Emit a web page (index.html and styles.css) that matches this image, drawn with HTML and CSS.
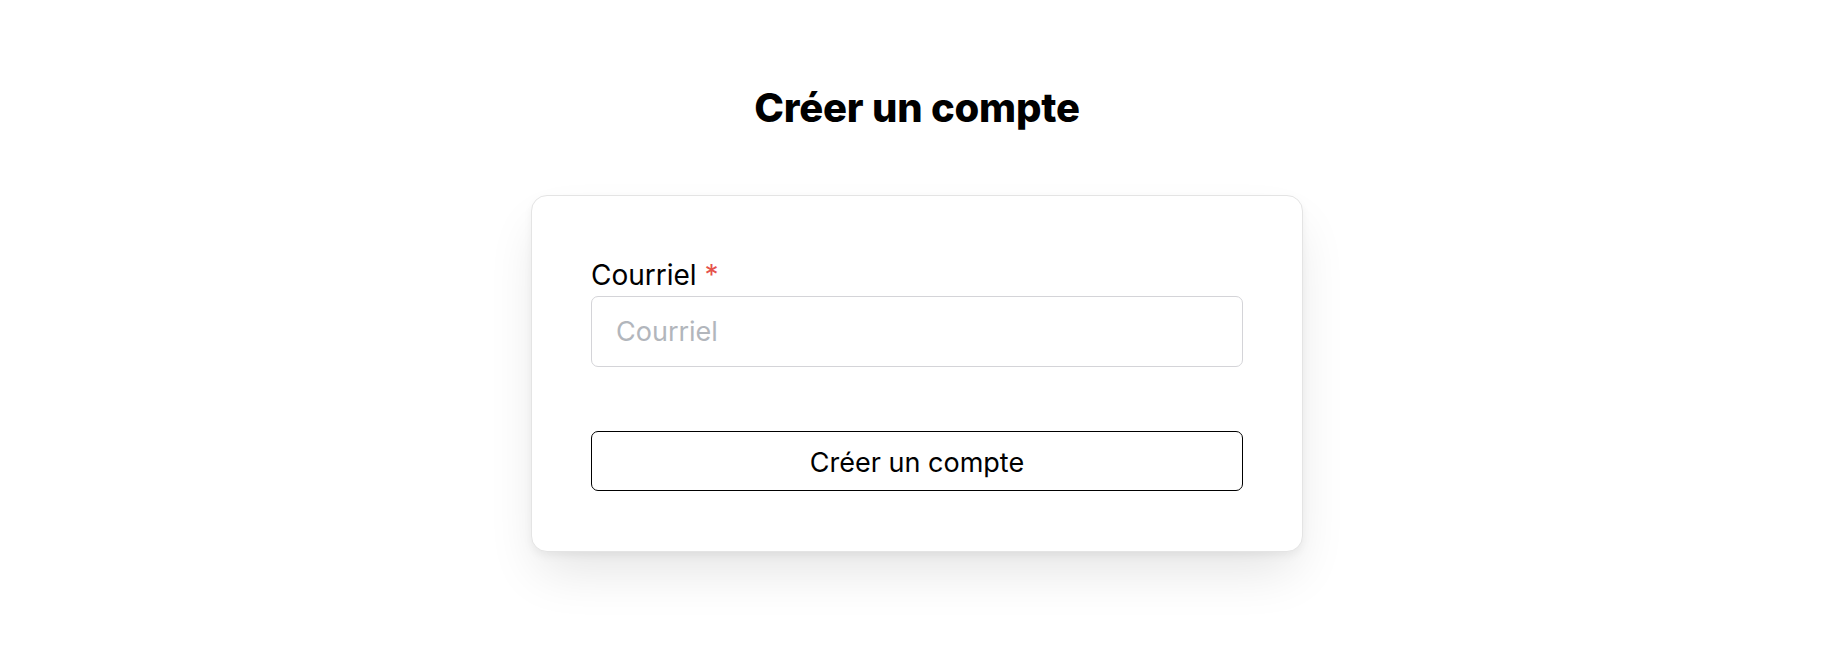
FILE: index.html
```html
<!DOCTYPE html>
<html lang="fr">
<head>
  <meta charset="UTF-8">
  <title>Créer un compte</title>
  <link rel="stylesheet" href="styles.css">
</head>
<body>
  <main class="page">
    <h1 class="titre">Créer un compte</h1>

    <form class="carte">
      <label class="etiquette" for="courriel">Courriel <span class="requis">*</span></label>
      <input type="email" id="courriel" class="champ" placeholder="Courriel">

      <button type="button" class="bouton">Créer un compte</button>
    </form>
  </main>
</body>
</html>
```

FILE: styles.css
```css
html, body {
  height: 100%;
}
body {
  margin: 0;
  background: #fff;
  color: #000;
  font-family: Inter, "Noto Sans", Arial, sans-serif;
}
.page {
  box-sizing: border-box;
  min-height: 100%;
  display: flex;
  flex-direction: column;
  align-items: center;
  padding: 84px 0 80px;
}
.titre {
  margin: 0 0 63px;
  font-size: 40px;
  line-height: 48px;
  font-weight: 800;
  letter-spacing: -0.2px;
}
.carte {
  box-sizing: border-box;
  width: 772px;
  display: flex;
  flex-direction: column;
  padding: 58px 59px 60px;
  background: #fff;
  border: 1px solid #e4e4e4;
  border-radius: 16px;
  box-shadow: 0 4px 8px rgba(0, 0, 0, 0.05), 0 26px 52px -8px rgba(0, 0, 0, 0.11);
}
.etiquette {
  font-size: 28px;
  line-height: 42px;
}
.requis {
  color: #e5534b;
}
.champ {
  box-sizing: border-box;
  height: 71px;
  padding: 0 24px;
  font-family: inherit;
  font-size: 27px;
  border: 1px solid #d4d4d8;
  border-radius: 7px;
  outline: none;
}
.champ::placeholder {
  color: #b2b6bc;
}
.bouton {
  margin-top: 64px;
  height: 60px;
  padding-top: 3px;
  background: #fff;
  border: 1px solid #000;
  border-radius: 7px;
  font-family: inherit;
  font-size: 27px;
  color: #000;
  cursor: pointer;
}
```
